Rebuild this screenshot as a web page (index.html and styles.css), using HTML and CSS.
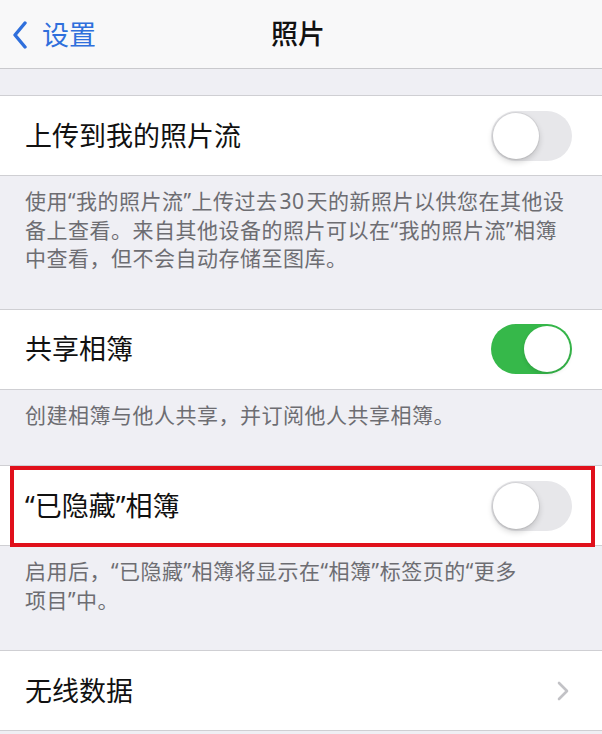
FILE: index.html
```html
<!DOCTYPE html>
<html lang="zh-CN">
<head>
<meta charset="utf-8">
<title>照片</title>
<link rel="stylesheet" href="styles.css">
</head>
<body>
<div class="screen">
  <header class="navbar">
    <a class="back">
      <svg class="back-chevron" viewBox="0 0 16 28" width="16" height="28"><path d="M13 2 L3 14 L13 26" fill="none" stroke="#2f6fdc" stroke-width="3.4" stroke-linecap="round" stroke-linejoin="round"/></svg>
      <span>设置</span>
    </a>
    <h1 class="title">照片</h1>
  </header>

  <div class="spacer"></div>

  <section class="group">
    <div class="cell">
      <span class="cell-label">上传到我的照片流</span>
      <span class="switch"><span class="knob"></span></span>
    </div>
  </section>
  <p class="footer">使用“我的照片流”上传过去 30 天的新照片以供您在其他设备上查看。来自其他设备的照片可以在“我的照片流”相簿中查看，但不会自动存储至图库。</p>

  <section class="group">
    <div class="cell">
      <span class="cell-label">共享相簿</span>
      <span class="switch on"><span class="knob"></span></span>
    </div>
  </section>
  <p class="footer">创建相簿与他人共享，并订阅他人共享相簿。</p>

  <section class="group">
    <div class="cell">
      <span class="cell-label">“已隐藏”相簿</span>
      <span class="switch"><span class="knob"></span></span>
    </div>
    <div class="highlight"></div>
  </section>
  <p class="footer">启用后，“已隐藏”相簿将显示在“相簿”标签页的“更多<span class="word">项目</span>”中。</p>

  <section class="group">
    <div class="cell">
      <span class="cell-label">无线数据</span>
      <svg class="disclosure" viewBox="0 0 12 20" width="12" height="20"><path d="M2 2 L10 10 L2 18" fill="none" stroke="#c2c2c6" stroke-width="2.6" stroke-linecap="round" stroke-linejoin="round"/></svg>
    </div>
  </section>
</div>
</body>
</html>
```

FILE: styles.css
```css
* { box-sizing: border-box; }

html, body {
  margin: 0;
  padding: 0;
  background: #efeff4;
}

body {
  /* Latin family first so curly quotes and digits stay proportional */
  font-family: "Noto Sans", "Noto Sans CJK SC", sans-serif;
  color: #111;
}

.screen {
  width: 602px;
  min-height: 734px;
  display: flex;
  flex-direction: column;
}

/* navigation bar */
.navbar {
  position: relative;
  height: 69px;
  background: #f8f8f9;
  border-bottom: 1px solid #c9c9cd;
  display: flex;
  align-items: center;
  justify-content: center;
}

.back {
  position: absolute;
  left: 12px;
  top: 17px;
  display: flex;
  align-items: center;
  gap: 14px;
  color: #2f6fdc;
  font-size: 27px;
  line-height: 36px;
}

.back-chevron { display: block; }

.title {
  margin: 0;
  font-size: 27px;
  font-weight: 500;
  line-height: 36px;
  color: #111;
  padding-right: 6px;
}

.spacer { height: 26px; }

/* grouped list */
.group {
  position: relative;
  background: #fff;
  border-top: 1px solid #cfcfd3;
  border-bottom: 1px solid #cfcfd3;
}

.cell {
  height: 79px;
  display: flex;
  align-items: center;
  justify-content: space-between;
  padding: 0 30px 0 25px;
}

.cell-label {
  font-size: 27px;
  line-height: 36px;
  color: #111;
}

.footer {
  margin: 0;
  padding: 11px 36px 36px 25px;
  font-size: 21px;
  line-height: 28.5px;
  color: #6d6d72;
  letter-spacing: 0.5px;
  word-spacing: -4px;
}

/* keep two-character words together when wrapping */
.word { white-space: nowrap; }

/* switches */
.switch {
  position: relative;
  width: 81px;
  height: 50px;
  border-radius: 25px;
  background: #e7e7ea;
  flex: none;
}

.switch .knob {
  position: absolute;
  top: 2px;
  left: 2px;
  width: 46px;
  height: 46px;
  border-radius: 50%;
  background: #fff;
  box-shadow: 0 0 0 1px rgba(0,0,0,0.06), 0 3px 6px rgba(0,0,0,0.18);
}

.switch.on { background: #36b84a; }

.switch.on .knob {
  left: 33px;
  box-shadow: 0 2px 4px rgba(0,0,0,0.12);
}

.disclosure {
  display: block;
  margin-right: 3px;
}

/* red annotation frame over the hidden-album row */
.highlight {
  position: absolute;
  left: 10px;
  right: 7px;
  top: 0;
  bottom: -2px;
  border: 4px solid #e0101b;
  pointer-events: none;
}
```
